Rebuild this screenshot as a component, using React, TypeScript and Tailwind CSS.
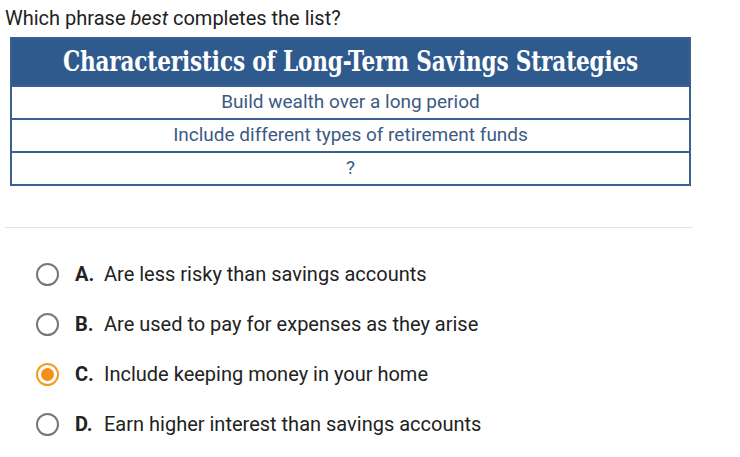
import React from "react";

const options = [
  { l: "A.", t: "Are less risky than savings accounts", sel: false },
  { l: "B.", t: "Are used to pay for expenses as they arise", sel: false },
  { l: "C.", t: "Include keeping money in your home", sel: true },
  { l: "D.", t: "Earn higher interest than savings accounts", sel: false },
];

export default function App() {
  return (
    <div className="w-[740px] h-[457px] bg-white overflow-hidden" style={{ fontFamily: "Roboto, 'Liberation Sans', sans-serif" }}>
      <div className="pl-[5px] pt-[5px] text-[20px] leading-[26px] text-[#222]">
        Which phrase <i>best</i> completes the list?
      </div>
      <div className="ml-[10px] mt-[6px] w-[681px] border-2 border-[#3b5f8f]">
        <div className="h-[46px] bg-[#2f5a8e] flex items-center justify-center text-white text-[27px]" style={{ fontFamily: "'DejaVu Serif', serif" }}>
          <span className="scale-x-[0.8] whitespace-nowrap font-bold tracking-[-0.2px]">Characteristics of Long-Term Savings Strategies</span>
        </div>
        <div className="h-[33px] border-t-2 border-[#3b5f8f] flex items-center justify-center text-[19px] text-[#3d5a82]">Build wealth over a long period</div>
        <div className="h-[33px] border-t-2 border-[#3b5f8f] flex items-center justify-center text-[19px] text-[#3d5a82]">Include different types of retirement funds</div>
        <div className="h-[33px] border-t-2 border-[#3b5f8f] flex items-center justify-center text-[19px] text-[#3d5a82]">?</div>
      </div>
      <div className="ml-[5px] mt-[41px] w-[688px] h-px bg-[#e3e3e3]" />
      <div className="mt-[34px] flex flex-col gap-[26px] pl-[36px]">
        {options.map((o) => (
          <div key={o.l} className="flex items-center h-[24px]">
            {o.sel ? (
              <div className="w-[23px] h-[23px] rounded-full border-[2px] border-[#f39c1f] flex items-center justify-center">
                <div className="w-[13px] h-[13px] rounded-full bg-[#f39019]" />
              </div>
            ) : (
              <div className="w-[23px] h-[23px] rounded-full border-[2px] border-[#777]" />
            )}
            <span className="ml-[16px] text-[20px] font-bold text-[#222] w-[29px]">{o.l}</span>
            <span className="text-[20px] text-[#222]">{o.t}</span>
          </div>
        ))}
      </div>
    </div>
  );
}
